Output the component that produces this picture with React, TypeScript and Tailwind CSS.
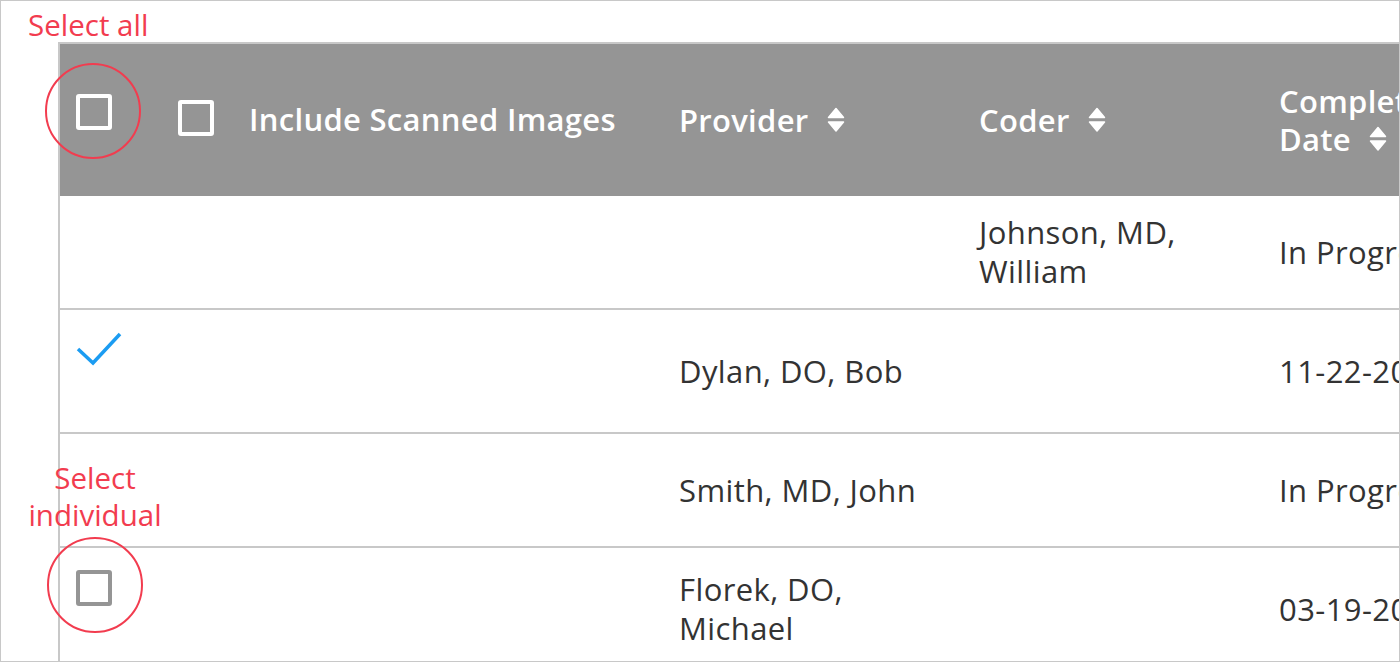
const SortIcon = () => (
  <svg viewBox="0 0 18 26" className="w-[18px] h-[26px] shrink-0" fill="white">
    <path d="M1.5 10.5 L9 1.5 L16.5 10.5 Z" strokeLinejoin="round" stroke="white" strokeWidth={1.5} />
    <path d="M1.5 15 L16.5 15 L9 24 Z" strokeLinejoin="round" stroke="white" strokeWidth={1.5} />
  </svg>
);

const Box = ({ tone }: { tone: "white" | "gray" }) => (
  <div
    className={
      tone === "white"
        ? "w-9 h-9 border-4 border-white rounded-[3px]"
        : "w-9 h-9 border-4 border-[#959595] rounded-[3px]"
    }
  />
);

const Check = () => (
  <svg viewBox="0 0 46 34" className="w-[46px] h-[34px]" fill="none">
    <polyline points="2,17 17,31 44,2" stroke="#1b9cf2" strokeWidth={3.5} />
  </svg>
);

type Row = {
  tall: boolean;
  mark?: "check" | "box";
  provider?: string;
  coder?: string;
  date?: string;
};

const rows: Row[] = [
  { tall: false, coder: "Johnson, MD, William", date: "In Progress" },
  { tall: true, mark: "check", provider: "Dylan, DO, Bob", date: "11-22-2019" },
  { tall: false, provider: "Smith, MD, John", date: "In Progress" },
  { tall: true, mark: "box", provider: "Florek, DO, Michael", date: "03-19-2020" },
];

export default function App() {
  return (
    <div className="relative w-[1400px] h-[662px] overflow-hidden border border-[#c8c8c8] bg-white font-['Open_Sans',sans-serif]">
      <div className="ml-[57px] mt-[41px] w-[1400px] border-l-2 border-t-2 border-[#c8c8c8]">
        {/* header */}
        <div className="flex h-[152px] bg-[#959595] text-white font-semibold text-[31px] tracking-[0.3px] leading-[38px]">
          <div className="w-[100px] shrink-0 pl-4 pt-[50px]">
            <Box tone="white" />
          </div>
          <div className="w-[499px] shrink-0 flex items-center pl-[18px] gap-[35px]">
            <div className="-mt-[4px]">
              <Box tone="white" />
            </div>
            <span className="whitespace-nowrap -mt-[3px]">Include Scanned Images</span>
          </div>
          <div className="w-[300px] shrink-0 flex items-center pl-5 gap-[18px]">
            <span>Provider</span>
            <SortIcon />
          </div>
          <div className="w-[300px] shrink-0 flex items-center pl-5 gap-[18px]">
            <span>Coder</span>
            <SortIcon />
          </div>
          <div className="w-[300px] shrink-0 flex items-center pl-5">
            <div>
              <div className="whitespace-nowrap">Complete</div>
              <div className="flex items-center gap-[18px]">
                <span>Date</span>
                <SortIcon />
              </div>
            </div>
          </div>
        </div>

        {/* rows */}
        {rows.map((r, i) => (
          <div
            key={i}
            className={
              (r.tall ? "h-[124px]" : "h-[114px]") +
              " flex border-b-2 border-[#c8c8c8] text-[31px] tracking-[0.4px] leading-[39px] text-[#333333]"
            }
          >
            <div className="w-[100px] shrink-0 pl-4 pt-[22px]">
              {r.mark === "check" && <Check />}
              {r.mark === "box" && <Box tone="gray" />}
            </div>
            <div className="w-[499px] shrink-0" />
            <div className="w-[300px] shrink-0 flex items-center pl-5 pr-[30px]">{r.provider}</div>
            <div className="w-[300px] shrink-0 flex items-center pl-5 pr-[30px]">{r.coder}</div>
            <div className="w-[300px] shrink-0 flex items-center pl-5 whitespace-nowrap">{r.date}</div>
          </div>
        ))}
      </div>

      {/* annotations */}
      <div className="absolute left-[27px] top-[7px] text-[29.5px] leading-[34px] text-[#f23c4f] whitespace-nowrap">
        Select all
      </div>
      <div className="absolute left-[44px] top-[62px] w-24 h-24 rounded-full border-2 border-[#f23c4f]" />
      <div className="absolute left-[14px] top-[458px] w-[160px] text-center text-[29.5px] leading-[37px] text-[#f23c4f]">
        Select
        <br />
        individual
      </div>
      <div className="absolute left-[46px] top-[536px] w-24 h-24 rounded-full border-2 border-[#f23c4f]" />
    </div>
  );
}
